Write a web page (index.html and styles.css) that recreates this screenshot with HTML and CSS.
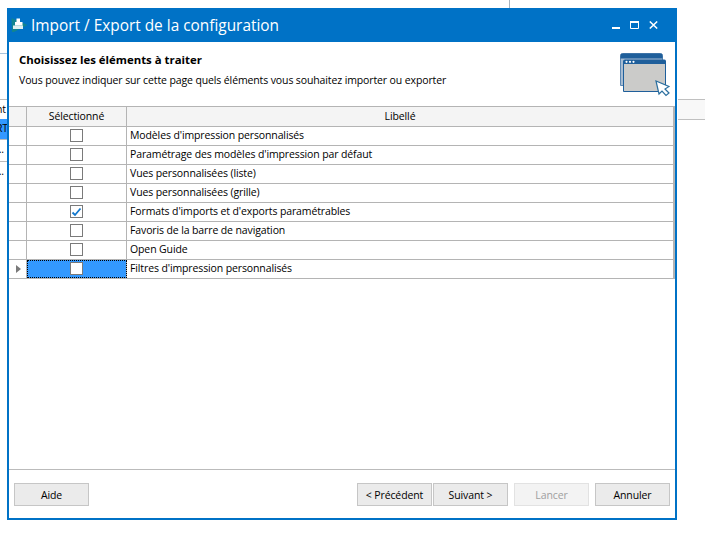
FILE: index.html
```html
<!DOCTYPE html>
<html lang="fr">
<head>
<meta charset="utf-8">
<title>Import / Export de la configuration</title>
<link rel="stylesheet" href="styles.css">
</head>
<body>
<div class="bg-line-top"></div>
<div class="bg-line-left"></div>
<div class="bg-frag">
  <div class="bg-row bg-head"><span>nt</span></div>
  <div class="bg-row bg-sel"><span>RT</span></div>
  <div class="bg-row bg-tall"><span>...</span></div>
  <div class="bg-row"><span>...</span></div>
</div>
<div class="bg-right"></div>
<main class="window">
  <header class="titlebar">
    <svg class="app-icon" width="17" height="16" viewBox="0 0 17 16">
      <path d="M0.500 1 L16.500 8 L3 15 L1 15Z" fill="#12858f"/>
      <path d="M2 8.500h10v3.500H2z" fill="#dff0f0"/>
      <path d="M5.500 1.500h3.500v3.500h2.500v3.500H4V5h1.500z" fill="#ffffff"/>
    </svg>
    <h1 class="title">Import / Export de la configuration</h1>
    <div class="controls">
      <svg width="8" height="8" viewBox="0 0 8 8"><path d="M0 6h8v2H0z" fill="#fff"/></svg>
      <svg width="9" height="8" viewBox="0 0 9 8"><path d="M0.500 1h8v6.500h-8z" fill="none" stroke="#fff" stroke-width="1"/><path d="M0 0h9v2H0z" fill="#fff"/></svg>
      <svg width="9" height="8" viewBox="0 0 9 8"><path d="M0.800 0.500 8.200 7.500M8.200 0.500 0.800 7.500" fill="none" stroke="#fff" stroke-width="1.500"/></svg>
    </div>
  </header>
  <section class="intro">
    <div class="intro-text">
      <h2 class="intro-title">Choisissez les éléments à traiter</h2>
      <p class="intro-desc">Vous pouvez indiquer sur cette page quels éléments vous souhaitez importer ou exporter</p>
    </div>
    <svg class="intro-icon" width="50" height="46" viewBox="0 0 50 46">
      <path d="M0.500 2.500a2 2 0 0 1 2-2h38a2 2 0 0 1 2 2v30H0.500z" fill="#a9bdd2" stroke="#5d88b3"/>
      <path d="M0.500 2.500a2 2 0 0 1 2-2h38a2 2 0 0 1 2 2v3H0.500z" fill="#1f5f9b"/>
      <path d="M3.500 10.500h42v28h-42z" fill="#cbcbc9" stroke="#1f5f9b"/>
      <path d="M3 8.500a2 2 0 0 1 2-2h38.500a2 2 0 0 1 2.500 2v2.500H3z" fill="#1f5f9b"/>
      <circle cx="6.500" cy="8.800" r="1.100" fill="#fff"/><circle cx="10" cy="8.800" r="1.100" fill="#fff"/><circle cx="13.500" cy="8.800" r="1.100" fill="#fff"/>
      <path d="M36 28 39 41l3-3 4 4.500 3-2.500-4-4 4-2.500z" fill="#fff" stroke="#2b6f9f" stroke-width="1.200"/>
    </svg>
  </section>
  <section class="grid">
    <div class="row head">
      <div class="cell gutter"></div>
      <div class="cell sel">Sélectionné</div>
      <div class="cell lib">Libellé</div>
    </div>
    <div class="row"><div class="cell gutter"></div><div class="cell sel"><span class="box"></span></div><div class="cell txt">Modèles d'impression personnalisés</div></div>
    <div class="row"><div class="cell gutter"></div><div class="cell sel"><span class="box"></span></div><div class="cell txt">Paramétrage des modèles d'impression par défaut</div></div>
    <div class="row"><div class="cell gutter"></div><div class="cell sel"><span class="box"></span></div><div class="cell txt">Vues personnalisées (liste)</div></div>
    <div class="row"><div class="cell gutter"></div><div class="cell sel"><span class="box"></span></div><div class="cell txt">Vues personnalisées (grille)</div></div>
    <div class="row"><div class="cell gutter"></div><div class="cell sel"><span class="box"><svg width="11" height="10" viewBox="0 0 11 10"><path d="M1.500 5.500 4 8 9.500 1.500" fill="none" stroke="#1177cc" stroke-width="1.800"/></svg></span></div><div class="cell txt">Formats d'imports et d'exports paramétrables</div></div>
    <div class="row"><div class="cell gutter"></div><div class="cell sel"><span class="box"></span></div><div class="cell txt">Favoris de la barre de navigation</div></div>
    <div class="row"><div class="cell gutter"></div><div class="cell sel"><span class="box"></span></div><div class="cell txt">Open Guide</div></div>
    <div class="row current"><div class="cell gutter"><span class="arrow"></span></div><div class="cell sel"><span class="box"></span></div><div class="cell txt">Filtres d'impression personnalisés</div></div>
  </section>
  <footer class="footer">
    <button class="btn">Aide</button>
    <div class="nav">
      <button class="btn">&lt; Précédent</button>
      <button class="btn">Suivant &gt;</button>
      <button class="btn run" disabled>Lancer</button>
      <button class="btn">Annuler</button>
    </div>
  </footer>
</main>
</body>
</html>
```
FILE: styles.css
```css
* { box-sizing: border-box; }
html, body { margin: 0; height: 100%; }
body {
  width: 705px;
  height: 544px;
  background: #fff;
  font-family: "Open Sans", sans-serif;
  font-size: 10.5px;
  letter-spacing: -0.12px;
  color: #000;
  overflow: hidden;
  position: relative;
}
.bg-line-top { position: absolute; left: 509px; top: 0; width: 1px; height: 8px; background: #a8b4c0; }
.bg-line-left { position: absolute; left: 0; top: 53px; width: 7px; height: 1px; background: #a9c4dc; }
.bg-frag { position: absolute; left: 0; top: 99px; width: 7px; overflow: hidden; }
.bg-row { height: 20px; border-top: 1px solid #bbb; line-height: 18px; white-space: nowrap; }
.bg-row span { display: block; margin-left: -4px; }
.bg-sel { background: #3399ff; border-top: 0; }
.bg-tall { height: 22px; }
.bg-right { position: absolute; left: 678px; top: 99px; width: 27px; height: 21px; border-top: 1px solid #c0c0c0; border-bottom: 1px solid #c0c0c0; background: #f8f8f8; }

.window {
  position: absolute;
  left: 7px;
  top: 8px;
  width: 670px;
  height: 512px;
  border: 2px solid #0072c6;
  border-top: 0;
  background: #fff;
  display: flex;
  flex-direction: column;
}
.titlebar {
  height: 34px;
  flex: none;
  background: #0072c6;
  display: flex;
  align-items: center;
  color: #fff;
  padding: 0 17px 0 2px;
}
.app-icon { flex: none; }
.title { flex: 1; margin: 2px 0 0 3px; font: 400 15.4px/24px "Open Sans", sans-serif; letter-spacing: 0; }
.controls { display: flex; gap: 10px; align-items: center; }
.intro { height: 64px; flex: none; display: flex; justify-content: space-between; padding: 10px 5px 0 10px; }
.intro-title { margin: 0; font: 700 11.4px/16px "Open Sans", sans-serif; letter-spacing: 0; }
.intro-desc { margin: 4px 0 0; line-height: 16px; }
.intro-icon { flex: none; margin-top: 1px; }

.grid { height: 364px; flex: none; border-bottom: 1px solid #bbb; }
.row { display: grid; grid-template-columns: 18px 100px 548px; height: 19px; border-bottom: 1px solid #b4b4b4; }
.row.head { height: 21px; background: #f4f4f4; border-top: 1px solid #b4b4b4; }
.cell { display: flex; align-items: center; border-right: 1px solid #b4b4b4; min-width: 0; }
.row:not(.head) .cell { padding-bottom: 1px; }
.lib, .txt { border-right-width: 2px; }
.head .cell { justify-content: center; padding-bottom: 2px; }
.row:not(.head) .gutter { margin-bottom: -1px; }
.sel { justify-content: center; }
.row:not(.head) .txt { padding-left: 3px; padding-bottom: 3px; white-space: nowrap; }
.box { width: 13px; height: 13px; border: 1px solid #7a7a7a; background: #fff; display: flex; align-items: center; justify-content: center; }
.current .sel { background: #3399ff; outline: 1px dotted #000; outline-offset: -1px; }
.arrow { width: 0; height: 0; margin-left: 7px; border-left: 5px solid #7a7a7a; border-top: 4px solid transparent; border-bottom: 4px solid transparent; }

.footer { flex: 1; display: flex; justify-content: space-between; padding: 13px 5px 0 5px; }
.nav { display: flex; }
.btn {
  width: 75px;
  height: 23px;
  padding: 1px 0 0;
  border: 1px solid #c6c6c6;
  background: #ebebeb;
  color: #000;
  font: 400 10.5px/1 "Open Sans", sans-serif;
  letter-spacing: -0.12px;
}
.nav .btn + .btn { margin-left: 1px; }
.nav .run { margin-left: 6px !important; background: #f3f3f3; border-color: #e2e2e2; color: #a0a0a0; }
.nav .run + .btn { margin-left: 6px; }
```
